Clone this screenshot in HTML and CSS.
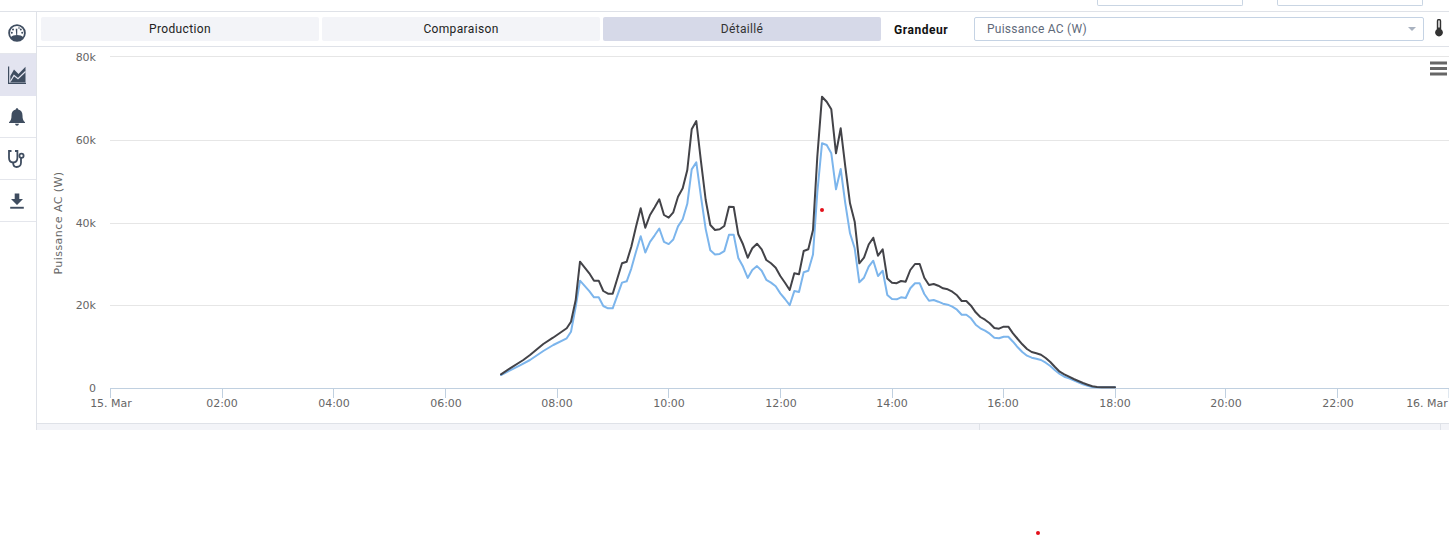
FILE: index.html
```html
<!DOCTYPE html>
<html lang="fr">
<head>
<meta charset="utf-8">
<title>Détaillé</title>
<link rel="stylesheet" href="styles.css">
</head>
<body>
<header class="topbar">
  <div class="datebox"></div>
  <div class="datebox"></div>
</header>
<div class="main">
  <nav class="sidebar">
    <a class="side-item"><svg class="ico" viewBox="0 0 18 18"><circle class="line" cx="9" cy="9" r="7.900"/><path d="M2.600 13.500C4 11.500 6.300 10.900 9 10.900s5 .6 6.400 2.600A8 8 0 0 1 9 17a8 8 0 0 1-6.400-3.500z"/><path d="M7.700 4.800h1.600l-.1 6.500H8.300z"/><circle cx="5" cy="5.400" r="1"/><circle cx="12.800" cy="5.400" r="1"/><circle cx="3.800" cy="8.800" r="1"/><circle cx="14.200" cy="8.800" r="1"/><circle cx="11" cy="4" r=".8"/></svg></a>
    <a class="side-item active"><svg class="ico" viewBox="0 0 18 18"><path d="M0 .5h1.200v16.300H18V18H0z"/><path d="M2.300 16.500V10L6 3.500 10.500 8 17.500 .8v15.700z"/><path class="cut" d="M2.300 15.500L6 9.500 10 12.800 17.500 5.500"/></svg></a>
    <a class="side-item"><svg class="ico" viewBox="0 0 18 18"><path d="M9 .3c.8 0 1.200.5 1.200 1.200 2.900.6 4.300 2.900 4.300 6 0 3.200.6 5 2.500 6.700V15H1v-.8c1.900-1.700 2.500-3.500 2.500-6.700 0-3.100 1.400-5.400 4.300-6C7.800.8 8.200.3 9 .3zM7 15.800h4c-.3 1.200-1 1.900-2 1.900s-1.700-.7-2-1.900z"/></svg></a>
    <a class="side-item"><svg class="ico" viewBox="0 0 18 18"><path class="line" d="M3.500 1H1v6.800c0 2.900 1.800 4.700 4.200 4.700s4.200-1.800 4.200-4.700V1H7"/><path class="line" d="M5.200 12.500v.8c0 2.200 1.500 3.700 3.500 3.700 2.300 0 4.300-1.600 4.300-4.200V8"/><circle class="line" cx="13.500" cy="5.800" r="2.100"/></svg></a>
    <a class="side-item"><svg class="ico" viewBox="0 0 18 18"><path d="M6.700 1.500h4.600v5.400h3.700L9 12.900 3 6.900h3.700z"/><path d="M2.200 14.800h13.600v1.900H2.200z"/></svg></a>
  </nav>
  <section class="content">
    <div class="toolbar">
      <button class="tab">Production</button>
      <button class="tab">Comparaison</button>
      <button class="tab selected">Détaillé</button>
      <span class="label">Grandeur</span>
      <div class="select">
        <span>Puissance AC (W)</span>
        <i class="caret"></i>
      </div>
      <svg class="thermo" viewBox="0 0 8 18"><path fill-rule="evenodd" d="M1.800 2a2.200 2.200 0 0 1 4.400 0v8.300a3.900 3.900 0 1 1-4.400 0zM3.300 2v6.500h1.400V2a.7.7 0 0 0-1.400 0z"/></svg>
    </div>
    <div class="chart">
      <svg class="plot" viewBox="37 47 1412 376" width="1412" height="376">
        <g class="grid">
          <path d="M110 56.500H1449"/>
          <path d="M110 140.500H1449"/>
          <path d="M110 223.500H1449"/>
          <path d="M110 305.500H1449"/>
        </g>
        <g class="axis">
          <path d="M110 388.500H1449"/>
          <path d="M110.500 388V398M222.500 388V398M333.500 388V398M445.500 388V398M557.500 388V398M668.500 388V398M780.500 388V398M892.500 388V398M1003.500 388V398M1115.500 388V398M1225.500 388V398M1337.500 388V398M1449 388V398"/>
        </g>
        <g class="ylabels">
          <text x="96" y="61">80k</text>
          <text x="96" y="144">60k</text>
          <text x="96" y="227">40k</text>
          <text x="96" y="309">20k</text>
          <text x="96" y="392">0</text>
        </g>
        <g class="xlabels">
          <text x="111" y="407">15. Mar</text>
          <text x="222" y="407">02:00</text>
          <text x="334" y="407">04:00</text>
          <text x="446" y="407">06:00</text>
          <text x="557" y="407">08:00</text>
          <text x="669" y="407">10:00</text>
          <text x="781" y="407">12:00</text>
          <text x="892" y="407">14:00</text>
          <text x="1003" y="407">16:00</text>
          <text x="1115" y="407">18:00</text>
          <text x="1226" y="407">20:00</text>
          <text x="1338" y="407">22:00</text>
          <text x="1427" y="407">16. Mar</text>
        </g>
        <text class="ytitle" transform="translate(62 223) rotate(-90)">Puissance AC (W)</text>
        <polyline class="series blue" points="501,375 520,365.300 530,360 543.300,351 553.300,345 566.700,338.300 571,331.700 575.700,306.700 580,280.700 589.300,291.100 594,297.300 598.700,297.300 603.300,306 608,308.300 612.700,308.300 622,282.600 626.700,281.300 631.300,268.600 636,251.700 640.700,236.200 645.300,252.500 650,241.800 654.700,235.300 659.300,228.500 664,241.800 668.700,244.100 673.300,239.500 678,226.400 682.700,219.300 687.300,203.800 691.700,169.400 696.300,162.400 701,196.800 705.700,229.100 710.300,250.300 715,254.500 719.700,253.900 724.300,251.100 729,234.800 733.700,234.800 738.300,258.100 743,266.600 747.700,277.900 752.300,270 757,266.100 761.700,270.800 766.300,279.800 771,282.600 775.700,286.300 780.300,293.400 785,299 789.700,305.200 794.300,291.100 799,291.900 803.700,272.200 808.300,270.800 813,254.500 817.300,192.500 822,143.300 826.700,145 831.300,153.300 836,189.300 840.700,169 845.300,203.300 850,233.300 854.700,248.300 859.300,282.300 864,277.700 868.700,266.700 873.300,260.700 878,276 882.700,270.700 887.300,295 892,299 896.700,299.300 901,297.300 905.700,298 910.300,288.300 915,283.300 919.700,283.300 924.300,294 929,300.700 933.700,300 938.300,301.700 943,303.700 947.700,304.700 952.300,306.700 957,309.700 961.700,314.700 966.300,314.700 971,318.300 975.700,324.700 980.300,328.300 985,330.700 989.700,333.700 994.300,337.700 999,338.300 1003.700,336.700 1008.300,336.700 1013,341.700 1017.700,347.300 1022.300,352 1027,355.700 1031.700,357.700 1036.300,358.700 1041,360 1045.700,362.700 1050.300,366 1055,370.300 1059.700,374 1064.300,376.700 1069,378.300 1073.700,380.300 1078.300,382.300 1083,384.300 1087.700,385.700 1092.300,387 1097,387.300 1115,387.300"/>
        <polyline class="series dark" points="501,374.300 510,368.300 523.300,360 530,355 543.300,344 553,337.700 566.700,328.300 571,321.700 575.700,300 580,261.700 589.300,273.300 594,280.700 598.700,280.700 603.300,291 608,293.700 612.700,293.700 622,263.300 626.700,261.700 631.300,246.700 636,226.700 640.700,208.300 645.300,227.700 650,215 654.700,207.300 659.300,199.300 664,215 668.700,217.700 673.300,212.300 678,196.700 682.700,188.300 687.300,170 691.700,129.300 696.300,121 701,161.700 705.700,200 710.300,225 715,230 719.700,229.300 724.300,226 729,206.700 733.700,207 738.300,234.300 743,244.300 747.700,257.700 752.300,248.300 757,243.700 761.700,249.300 766.300,260 771,263.300 775.700,267.700 780.300,276 785,282.700 789.700,290 794.300,273.300 799,274.300 803.700,251 808.300,249.300 813,230 817.300,156.700 822,96.700 826.700,101.700 831.300,109.300 836,153.300 840.700,128.300 845.300,166.700 850,203.300 854.700,221.700 859.300,263.300 864,257.700 868.700,244.500 873.300,237.700 878,255.700 882.700,249.300 887.300,278.500 892,282.700 896.700,283.200 901,281 905.700,281.700 910.300,270 915,264 919.700,264 924.300,277.700 929,285 933.700,284 938.300,285.700 943,288.300 947.700,289.300 952.300,291.700 957,295.300 961.700,301 966.300,301 971,305.700 975.700,312.300 980.300,317 985,319.700 989.700,323.300 994.300,328 999,328.700 1003.700,326.700 1008.300,326.700 1013,333.300 1017.700,339 1022.300,344.300 1027,349 1031.700,352 1036.300,353.300 1041,354.700 1045.700,358 1050.300,362 1055,367 1059.700,371.700 1064.300,374.300 1069,376.700 1073.700,379 1078.300,381 1083,383 1087.700,384.700 1092.300,386.300 1097,387 1101.700,387.300 1115,387.300"/>
        <g class="menu">
          <path d="M1430 63h17M1430 68.500h17M1430 74h17"/>
        </g>
      </svg>
      <span class="dot dot-chart"></span>
    </div>
    <div class="navigator">
      <div class="nav-left"></div>
      <div class="nav-mid"></div>
      <div class="nav-right"></div>
    </div>
  </section>
</div>
<span class="dot dot-page"></span>
</body>
</html>
```

FILE: styles.css
```css
* { box-sizing: border-box; }
html, body { margin: 0; padding: 0; background: #fff; }
body {
  height: 535px;
  overflow: hidden;
  position: relative;
  font-family: Roboto, "Liberation Sans", sans-serif;
  font-size: 12px;
}
.topbar {
  height: 12px;
  display: flex;
  justify-content: flex-end;
  gap: 34px;
  padding-right: 26px;
  border-bottom: 1px solid #dfe2e8;
}
.datebox {
  width: 146px;
  height: 6px;
  border: 1px solid #c9d5e3;
  border-top: 0;
  border-radius: 0 0 2px 2px;
}
.main { display: flex; height: 418px; }
.sidebar {
  width: 37px;
  flex: none;
  border-right: 1px solid #dfe2e8;
}
.side-item {
  height: 42px;
  display: flex;
  align-items: center;
  justify-content: center;
  border-bottom: 1px solid #e4e6ec;
  padding-right: 3px;
}
.side-item.active { background: #e3e4f0; border-bottom-color: #e3e4f0; }
.ico { width: 18px; height: 18px; flex: none; fill: #3f4d60; }
.ico .line { fill: none; stroke: #3f4d60; stroke-width: 1.800; }
.ico .cut { fill: none; stroke: #e3e4f0; stroke-width: 1.200; }
.content { flex: 1; min-width: 0; display: flex; flex-direction: column; }
.toolbar {
  height: 35px;
  flex: none;
  display: flex;
  align-items: flex-start;
  padding: 5px 0 0 4px;
  border-bottom: 1px solid #dfe2e8;
}
.tab {
  width: 278px;
  height: 24px;
  flex: none;
  margin-right: 3px;
  border: 0;
  border-radius: 2px;
  background: #f3f4f8;
  color: #222;
  font: 12px Roboto, "Liberation Sans", sans-serif;
  letter-spacing: .35px;
  padding: 0;
}
.tab.selected { background: #d6d9e8; color: #333; }
.label {
  width: 80px;
  flex: none;
  margin-left: 10px;
  line-height: 26px;
  font-weight: 700;
  font-size: 12px;
  letter-spacing: .55px;
  color: #111;
}
.select {
  width: 450px;
  height: 24px;
  flex: none;
  border: 1px solid #c5d3e4;
  border-radius: 2px;
  padding: 0 8px 0 12px;
  display: flex;
  align-items: center;
  justify-content: space-between;
  color: #5f6a7a;
  letter-spacing: .25px;
  line-height: 20px;
}
.select span { margin-top: -1px; }
.caret {
  width: 0;
  height: 0;
  border-left: 4px solid transparent;
  border-right: 4px solid transparent;
  border-top: 4px solid #a9b2c0;
  margin-right: -1px;
}
.thermo { width: 8px; height: 18px; flex: none; margin-left: 11px; margin-top: 2px; fill: #333; }
.chart { position: relative; height: 376px; flex: none; }
.plot { display: block; }
.grid path { stroke: #e6e6e6; stroke-width: 1; fill: none; }
.axis path { stroke: #c0d0e0; stroke-width: 1; fill: none; }
.ylabels text, .xlabels text, .ytitle {
  font-family: "DejaVu Sans", sans-serif;
  font-size: 11px;
  fill: #666;
}
.ylabels text { text-anchor: end; }
.xlabels text, .ytitle { text-anchor: middle; }
.ytitle { letter-spacing: .45px; }
.series { fill: none; stroke-width: 2; stroke-linejoin: round; stroke-linecap: round; }
.series.blue { stroke: #7cb5ec; }
.series.dark { stroke: #434348; }
.menu path { stroke: #666; stroke-width: 3; fill: none; }
.dot {
  position: absolute;
  width: 4px;
  height: 4px;
  border-radius: 50%;
  background: #e3101a;
}
.dot-chart { left: 783px; top: 161px; }
.dot-page { left: 1036px; top: 531px; }
.navigator {
  height: 7px;
  flex: none;
  display: flex;
  background: #f3f4f8;
  border-top: 1px solid #dfe2e8;
}
.nav-left { width: 942px; flex: none; }
.nav-mid { width: 461px; flex: none; border-left: 1px solid #dfe2e8; }
.nav-right { flex: 1; border-left: 1px solid #dfe2e8; }
```
